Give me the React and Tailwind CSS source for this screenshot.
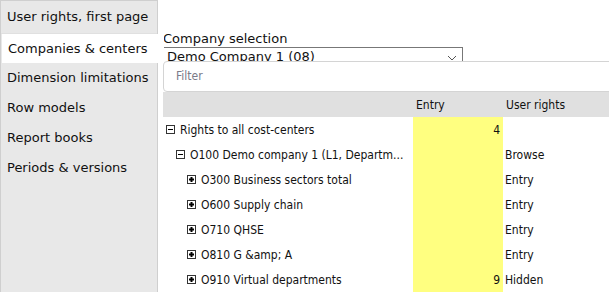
import React from 'react';

const font = { fontFamily: '"DejaVu Sans", Verdana, sans-serif' };
const narrow = { fontFamily: '"DejaVu Sans Condensed", "DejaVu Sans", sans-serif', fontStretch: 'condensed' };

function Toggle({ open }) {
  return (
    <svg width="9" height="9" viewBox="0 0 9 9" className="shrink-0">
      <rect x="0.5" y="0.5" width="8" height="8" fill="#fff" stroke="#333" />
      <rect x="2" y="4" width="5" height="1" fill="#000" />
      {!open && <rect x="2" y="3.5" width="5" height="2" fill="#000" />}
      {!open && <rect x="3.5" y="2" width="2" height="5" fill="#000" />}
    </svg>
  );
}

const menu = [
  'User rights, first page',
  'Companies & centers',
  'Dimension limitations',
  'Row models',
  'Report books',
  'Periods & versions',
];

const rows = [
  { level: 0, open: true, name: 'Rights to all cost-centers', entry: '4', rights: '' },
  { level: 1, open: true, name: 'O100 Demo company 1 (L1, Departm...', entry: '', rights: 'Browse' },
  { level: 2, name: 'O300 Business sectors total', entry: '', rights: 'Entry' },
  { level: 2, name: 'O600 Supply chain', entry: '', rights: 'Entry' },
  { level: 2, name: 'O710 QHSE', entry: '', rights: 'Entry' },
  { level: 2, name: 'O810 G &amp; A', entry: '', rights: 'Entry' },
  { level: 2, name: 'O910 Virtual departments', entry: '9', rights: 'Hidden' },
];

const indent = ['pl-[3px]', 'pl-[13px]', 'pl-[24px]'];

export default function App() {
  return (
    <div className="w-[609px] h-[292px] flex bg-white text-[13px] text-[#111] overflow-hidden" style={font}>
      {/* Left menu */}
      <div className="w-[158px] shrink-0 bg-[#e8e8e8] border-r border-t border-l border-[#cfcfcf] flex flex-col">
        {menu.map((m, i) => (
          <div
            key={m}
            className={
              i === 1
                ? 'h-[29px] flex items-center pl-[6px] bg-white -mr-[7px] ml-[1px] relative z-10'
                : i === 0
                ? 'h-[33px] flex items-center pl-[6px] border-b border-[#e0e0e0]'
                : 'h-[30px] flex items-center pl-[6px]'
            }
          >
            {m}
          </div>
        ))}
      </div>

      {/* Main */}
      <div className="flex-1 pl-[5px] pt-[31px] flex flex-col min-w-0">
        <div className="leading-[16px]">Company selection</div>
        <div className="w-[300px] h-[14px] border-t border-l border-r border-[#777] relative pl-[3px] overflow-hidden">
          <div className="leading-[16px] mt-[1px] text-[13px]">Demo Company 1 (08)</div>
          <svg width="10" height="6" viewBox="0 0 10 6" className="absolute right-[5px] top-[7px]">
            <path d="M1 1 L5 5 L9 1" fill="none" stroke="#555" strokeWidth="1" />
          </svg>
        </div>
        <div className="h-[32px] border border-[#d4d4d4] rounded-[4px] -mr-[6px] flex items-center pl-[12px] text-[12px] text-[#7b7b88]" style={narrow}>
          Filter
        </div>
        <div style={narrow} className="text-[12px] flex flex-col">
          {/* Header */}
          <div className="h-[25px] bg-[#e0e0e0] flex items-center shrink-0">
            <div className="w-[250px]" />
            <div className="w-[90px] pl-[3px]">Entry</div>
            <div className="pl-[3px]">User rights</div>
          </div>
          {rows.map((r) => (
            <div key={r.name} className="h-[25px] flex items-stretch shrink-0">
              <div className={`w-[250px] flex items-center gap-[5px] whitespace-nowrap ${indent[r.level]}`}>
                <Toggle open={r.open} />
                <span>{r.name}</span>
              </div>
              <div className="w-[90px] bg-[#ffff80] flex items-center justify-end pr-[3px]">{r.entry}</div>
              <div className="flex items-center pl-[2px]">{r.rights}</div>
            </div>
          ))}
        </div>
      </div>
    </div>
  );
}
